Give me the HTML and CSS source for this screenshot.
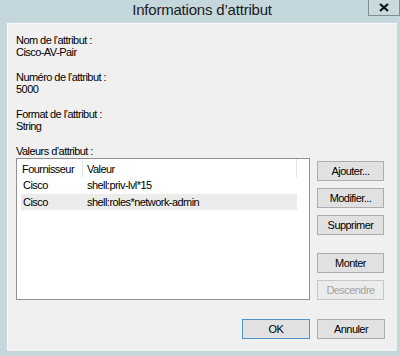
FILE: index.html
```html
<!DOCTYPE html>
<html lang="fr">
<head>
<meta charset="utf-8">
<title>Informations d’attribut</title>
<link rel="stylesheet" href="styles.css">
</head>
<body>
<div class="window">
  <div class="titlebar">
    <span class="tb-spacer"></span>
    <span class="title">Informations d’attribut</span>
    <div class="tb-right">
      <button class="close" aria-label="Fermer">
        <svg width="12" height="9" viewBox="0 0 12 9"><path d="M2 1 L10 8 M10 1 L2 8" stroke="#111" stroke-width="2.2" fill="none"/></svg>
      </button>
    </div>
  </div>
  <div class="client">
    <div class="field">
      <div class="line">Nom de l’attribut :</div>
      <div class="line">Cisco-AV-Pair</div>
    </div>
    <div class="field">
      <div class="line">Numéro de l’attribut :</div>
      <div class="line">5000</div>
    </div>
    <div class="field">
      <div class="line">Format de l’attribut :</div>
      <div class="line">String</div>
    </div>
    <div class="line">Valeurs d’attribut :</div>
    <div class="values-row">
      <div class="listbox">
        <div class="lv-header">
          <div class="h-col1">Fournisseur</div>
          <div class="h-col2">Valeur</div>
          <div class="h-filler"></div>
        </div>
        <div class="lv-row">
          <span class="c1">Cisco</span><span class="c2">shell:priv-lvl*15</span>
        </div>
        <div class="lv-row selected">
          <span class="c1">Cisco</span><span class="c2">shell:roles*network-admin</span>
        </div>
      </div>
      <div class="side-buttons">
        <button class="btn">Ajouter...</button>
        <button class="btn">Modifier...</button>
        <button class="btn">Supprimer</button>
        <button class="btn sep">Monter</button>
        <button class="btn" disabled>Descendre</button>
      </div>
    </div>
    <div class="footer">
      <button class="btn wide default">OK</button>
      <button class="btn wide">Annuler</button>
    </div>
  </div>
</div>
</body>
</html>
```

FILE: styles.css
```css
* { box-sizing: border-box; }
html, body {
  margin: 0;
  padding: 0;
}
body {
  width: 400px;
  height: 356px;
  overflow: hidden;
  background: #c4d7dd;
  font-family: "Liberation Sans", Arial, sans-serif;
  font-size: 11px;
  color: #000;
}
.window {
  display: flex;
  flex-direction: column;
  height: 356px;
}
.titlebar {
  height: 23px;
  display: grid;
  grid-template-columns: 1fr auto 1fr;
  align-items: start;
}
.title {
  font-size: 15px;
  letter-spacing: -0.2px;
  line-height: 20px;
  color: #1b1b1b;
  padding-left: 4px;
}
.tb-right {
  display: flex;
  justify-content: flex-end;
}
.close {
  width: 32px;
  height: 16px;
  margin: 0;
  padding: 0;
  border: 1px solid #7d8e94;
  border-top: none;
  background: #c8dade;
  display: flex;
  align-items: center;
  justify-content: center;
}
.client {
  flex: 1;
  margin: 0 3px 5px 7px;
  background: #f0f0f0;
  border-top: 1px solid #fafafa;
  border-left: 1px solid #fafafa;
  padding: 10px 12px 0 8px;
  display: flex;
  flex-direction: column;
}
.line {
  line-height: 12px;
  height: 12px;
  letter-spacing: -0.55px;
  white-space: nowrap;
}
.field {
  margin-bottom: 13px;
}
.values-row {
  display: flex;
  gap: 7px;
  margin-top: 1px;
}
.listbox {
  width: 294px;
  height: 142px;
  background: #fff;
  border: 1px solid #8f9192;
}
.lv-header {
  display: flex;
  height: 18px;
  align-items: stretch;
}
.h-col1, .h-col2 {
  border-right: 1px solid #e3e3e3;
  line-height: 20px;
  letter-spacing: -0.55px;
}
.h-col1 { width: 66px; padding-left: 5px; }
.h-col2 { width: 214px; padding-left: 4px; }
.h-filler { flex: 1; }
.lv-row {
  display: flex;
  height: 16px;
  line-height: 17px;
  margin-left: 4px;
  width: 276px;
  letter-spacing: -0.55px;
  white-space: nowrap;
}
.lv-row + .lv-row { margin-top: 1px; }
.lv-row.selected { background: #ececec; }
.c1 { width: 66px; padding-left: 2px; }
.c2 { flex: 1; }
.side-buttons {
  display: flex;
  flex-direction: column;
  gap: 7px;
  margin-top: 3px;
}
.btn {
  width: 67px;
  height: 20px;
  margin: 0;
  padding: 0;
  background: #e1e1e1;
  border: 1px solid #adadad;
  font-family: "Liberation Sans", Arial, sans-serif;
  font-size: 11px;
  letter-spacing: -0.55px;
  color: #000;
  line-height: 18px;
}
.btn.sep { margin-top: 11px; }
.btn:disabled {
  background: #ececec;
  border-color: #c6c6c6;
  color: #a3a3a3;
}
.footer {
  display: flex;
  justify-content: flex-end;
  gap: 7px;
  margin-top: 19px;
}
.btn.wide { width: 68px; }
.btn.default { border-color: #4d93cf; }
```
